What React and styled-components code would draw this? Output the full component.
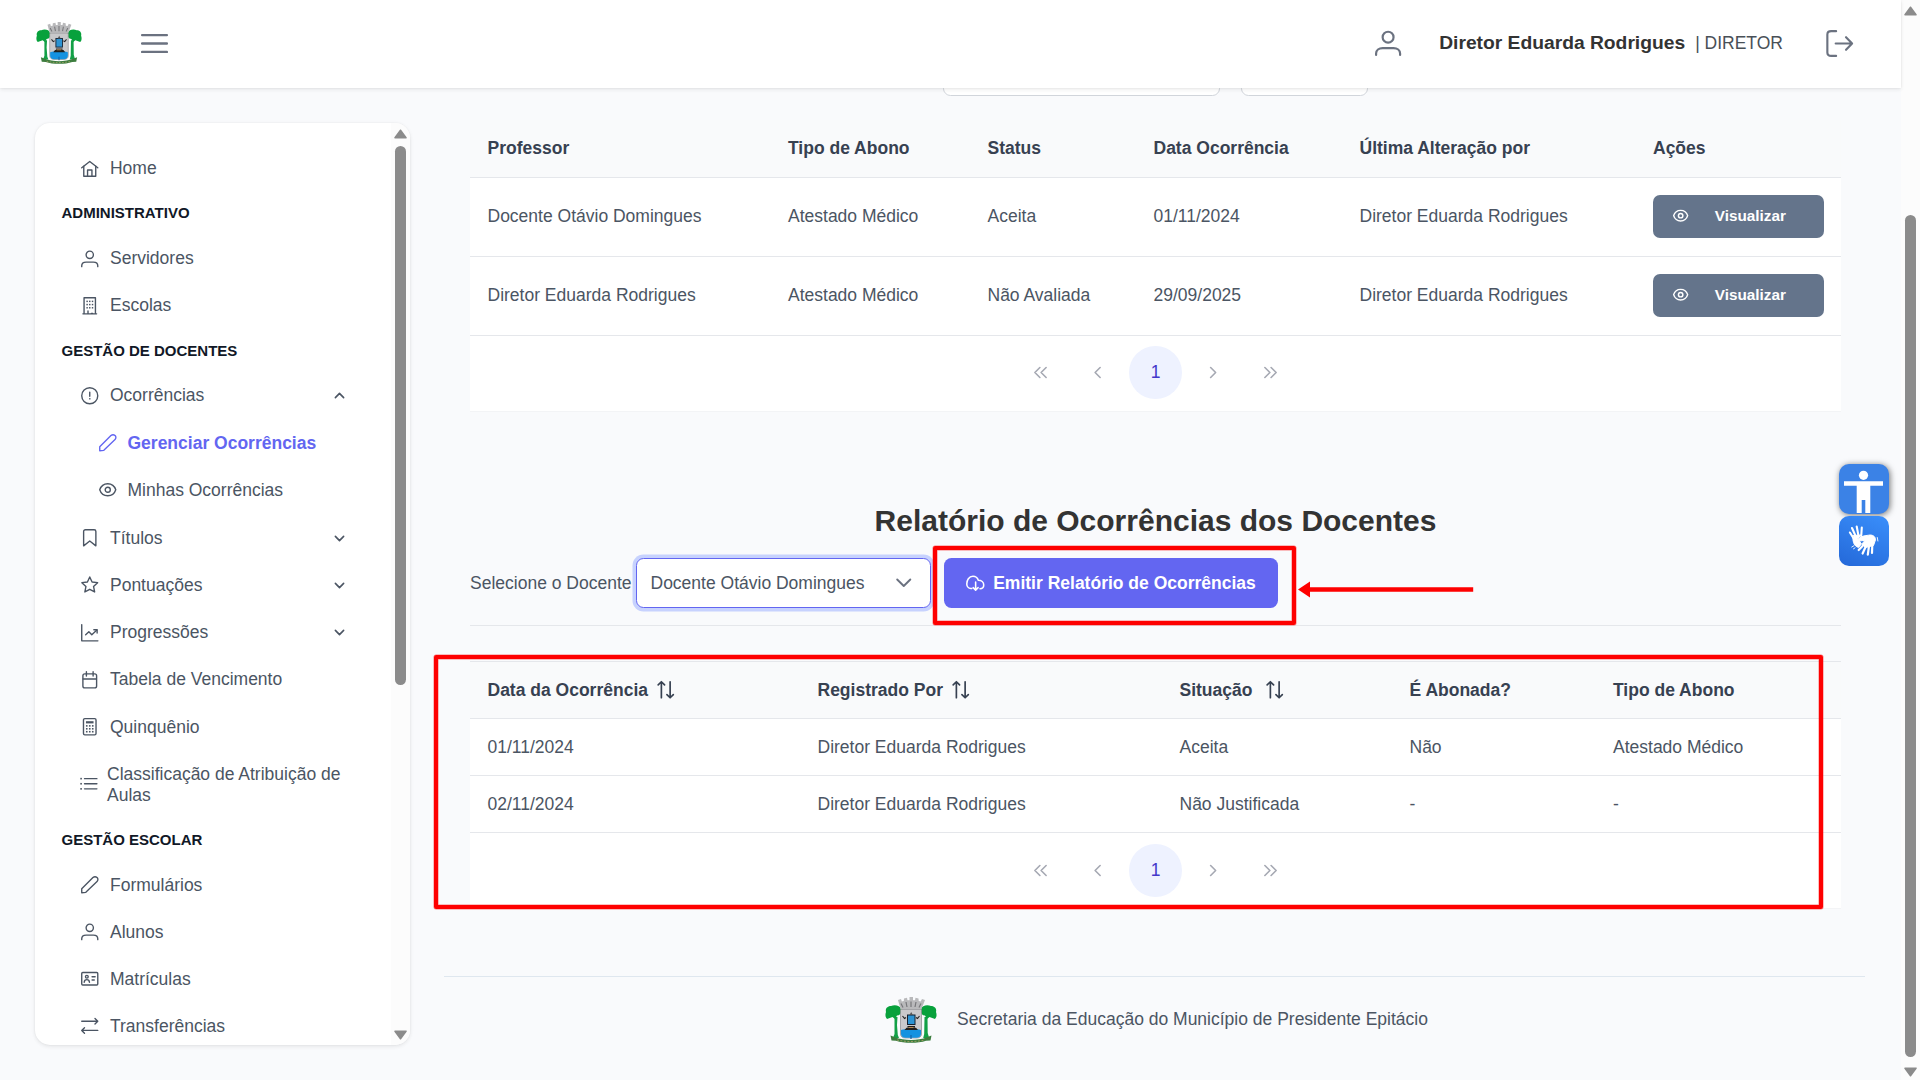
import React from "react";
import styled, { createGlobalStyle, css } from "styled-components";

const GlobalStyle = createGlobalStyle`
  *, *::before, *::after { box-sizing: border-box; }
  html, body { margin: 0; height: 100%; overflow: hidden; }
  body {
    background: #f9fafc;
    color: #4b5563;
    font-family: "Liberation Sans", Arial, Helvetica, sans-serif;
    font-size: 17.5px;
  }
  button { font-family: inherit; }
`;

/* ---------- icons ---------- */

const Svg = styled.svg`
  display: block;
  flex: none;
  width: ${(p) => p.$size || 17.5}px;
  height: ${(p) => p.$size || 17.5}px;
  fill: none;
  stroke: currentColor;
  stroke-width: ${(p) => p.$weight || 1.9};
  stroke-linecap: round;
  stroke-linejoin: round;
`;

const dot = (x, y, w = 2, h = 2) => (
  <rect key={`${x}-${y}`} x={x} y={y} width={w} height={h} fill="currentColor" stroke="none" />
);

const shapes = {
  home: (
    <>
      <path d="M1 10.6 12 2l11 8.6" />
      <path d="M3.8 8.6v13.6h16.4V8.6" />
      <path d="M9 22v-8.2h6V22" />
    </>
  ),
  user: (
    <>
      <circle cx="12" cy="6.6" r="5" />
      <path d="M1 22.8v-1.2c0-2.9 2.6-5 6-5h10c3.4 0 6 2.1 6 5v1.2" />
    </>
  ),
  building: (
    <>
      <path d="M2.6 23.1h18.8M4.2 23V1h15.6v22" />
      {[5, 9.4, 13.8].map((y) => [dot(7.4, y), dot(11, y), dot(14.8, y)])}
      <path d="M9.6 22.5v-3.4M14.2 22.5h1.8" />
    </>
  ),
  alert: (
    <>
      <circle cx="12" cy="12" r="11" />
      <path d="M12 7v5.6" />
      {dot(11.1, 15.2, 1.9, 1.9)}
    </>
  ),
  pencil: <path d="M1 23v-5.4L16.4 2.2a4.1 4.1 0 0 1 5.6 0 3.7 3.7 0 0 1 0 5.4L6.6 22.4z" />,
  eye: (
    <>
      <path d="M1 12c1.8-5.6 6-8.3 11-8.3s9.2 2.7 11 8.3c-1.8 5.6-6 8.3-11 8.3S2.8 17.6 1 12z" />
      <circle cx="12" cy="12" r="3.5" />
    </>
  ),
  bookmark: <path d="M3.6 23.1V3.4C3.6 2 4.600 1 6 1h12c1.4 0 2.4 1 2.4 2.4v19.7L12 16.5z" />,
  star: (
    <path d="M12 1.3l3.2 6.9 7.6.9-5.6 5.2 1.5 7.6L12 18.2l-6.7 3.7 1.5-7.6L1.2 9.1l7.6-.9z" />
  ),
  chart: (
    <>
      <path d="M1 .8v22.3h22.2" />
      <path d="M6.4 14.8l4.4-4.1 4 4.1 7-6.6" />
      <path d="M17.6 7.900h4.500v4.400" />
    </>
  ),
  calendar: (
    <>
      <rect x="2.6" y="3.9" width="18.8" height="19.2" rx="2.6" />
      <path d="M7.4.9v6M16.6.9v6M3 11h18" />
    </>
  ),
  calculator: (
    <>
      <rect x="3.4" y=".9" width="17.2" height="22.2" rx="1.8" />
      {dot(6.8, 4.4, 10.4, 3)}
      {[9.7, 13.7, 17.7].map((y) => [dot(6.8, y, 2.2, 2.2), dot(10.9, y, 2.2, 2.2), dot(15, y, 2.2, 2.2)])}
    </>
  ),
  list: (
    <>
      <path d="M6.2 5h17M6.2 12h17M6.2 19h17" />
      {[5, 12, 19].map((y) => dot(0.4, y - 1.1, 2.2, 2.2))}
    </>
  ),
  card: (
    <>
      <rect x="1" y="3.4" width="22" height="17.2" rx="1.4" />
      <circle cx="8" cy="9.2" r="1.9" />
      <path d="M4.4 16.800c.2-2.500 1.600-3.600 3.600-3.600s3.400 1.100 3.600 3.600M15.200 9.200h4.200M15.200 13.800h3" />
    </>
  ),
  exchange: (
    <>
      <path d="M1 5.800h22M19.200 2l3.800 3.800-3.800 3.800" />
      <path d="M23 18.400H1M4.800 14.600 1 18.400l3.800 3.800" />
    </>
  ),
  cloud: (
    <>
      <path d="M7.600 18.900H6.400C3.200 18.700 1 16 1 12.900 1 8 3.800 3 9 3c3.700 0 6 2.200 7 5.200 4 0 7 2.400 7 6 0 2.700-2 4.800-4.800 4.900" />
      <path d="M12.500 10.500v10.300M9.300 17.700l3.200 3.200 3.200-3.200" />
    </>
  ),
  signout: (
    <>
      <path d="M9 1H4.600C2.600 1 1.200 2.200 1.200 4v16c0 1.800 1.400 3 3.400 3H9" />
      <path d="M8.600 12H23M17.800 6.400 23.200 12l-5.400 5.600" />
    </>
  ),
  bars: <path d="M1 4.500h22M1 12h22M1 19.500h22" />,
  sort: (
    <>
      <path d="M6 23V1.400M1.600 5.400 6 1l4.400 4.400" />
      <path d="M18 1v21.600M13.600 18.600 18 23l4.400-4.400" />
    </>
  ),
  down: <path d="M3 7.500l9 9 9-9" />,
  up: <path d="M3 16.500l9-9 9 9" />,
  left: <path d="M14.600 4l-8 8 8 8" />,
  right: <path d="M7.400 4l8 8-8 8" />,
  first: <path d="M11 4l-8 8 8 8M21 4l-8 8 8 8" />,
  last: <path d="M3 4l8 8-8 8M13 4l8 8-8 8" />,
};

const Icon = ({ name, size, weight }) => (
  <Svg viewBox="0 0 24 24" $size={size} $weight={weight} overflow="visible">
    {shapes[name]}
  </Svg>
);

const CrestSvg = styled.svg`
  display: block;
  flex: none;
  width: ${(p) => p.$w}px;
  height: ${(p) => p.$h}px;
`;

const Crest = ({ w, h }) => (
  <CrestSvg viewBox="0 0 52 46" preserveAspectRatio="none" $w={w} $h={h}>
    <path d="M9.500 20h3l-.5 8 .8 10 1.200 3H8l1.500-4z" fill="#12a046" />
    <path d="M39.500 20h3l.2 16 1.500 5h-6l1-4z" fill="#12a046" />
    <path d="M1 15c-1-4 2-6 5-6 4-1.500 9-.5 10 3 1 4-1 6.500-4 6.500L10 22 7.500 20 2 22C0 20 .2 17 1 15z" fill="#08a13c" />
    <path d="M51 15c1-4-2-6-5-6-4-1.500-9-.5-10 3-1 4 1 6.500 4 6.500L42 22l2.500-2 5.500 2c2-2 1.800-5 1-7z" fill="#08a13c" />
    <path d="M13 3l3-1 .8 2.500 2-.4L19 1.500l3-.8.5 2.500h2V0h3.500v3.200h2l.5-2.500 3 .8.200 2.600 2 .4L37 2l3 1-3.500 9h-21z" fill="#b9b9bb" />
    <path d="M16 6.500l2 4M21 5l1 5M26 4.500V10M31 5l-1 5M36 6.500l-2 4" stroke="#77777a" strokeWidth="1.200" />
    <path d="M15.500 12.500h21V37c0 2.500-2 4-5 4h-11c-3 0-5-1.500-5-4z" fill="#c9c9cb" stroke="#8a8a8d" strokeWidth=".7" />
    <path d="M16 33c3-1.500 6-.5 10-.5s7-1 10 .5v4c0 2.300-2 3.700-4.500 3.700h-11C18 40.700 16 39.300 16 37z" fill="#1592e0" />
    <rect x="22.500" y="18" width="7.500" height="9.500" fill="#2c93d2" stroke="#152230" strokeWidth="1" />
    <path d="M24.500 18l1.700-3 1.700 3z" fill="#555" />
    <path d="M17.500 19l2 2.500 1.500-1M34.500 19l-2 2.500-1.500-1" fill="none" stroke="#222" strokeWidth="1.100" />
    <path d="M19.500 33l2-2.200h9.500l2 2.200zM22.500 29h7.500v1.400h-7.500z" fill="#20201e" />
    <path d="M23.500 30.500h5" stroke="#d79b50" strokeWidth=".8" />
    <path d="M5.500 38.500l4 1.500c5 2.200 11 3 16.500 3s11.500-.8 16.500-3l4-1.500-1 5-4.500.2c-4 1.500-9.500 2-15 2s-11-.5-15-2l-4.500-.2z" fill="#3c7d3e" />
    <path d="M12 43c9 2 19 2 28 0" fill="none" stroke="#b3a46a" strokeWidth=".8" strokeDasharray="2 1.500" />
    <path d="M26 38v4" stroke="#1565a5" strokeWidth="1.200" />
  </CrestSvg>
);

/* ---------- shell ---------- */

const Shell = styled.div`
  display: flex;
  width: 1920px;
  height: 1080px;
  overflow: hidden;
`;

const Page = styled.div`
  flex: 1;
  display: flex;
  flex-direction: column;
  min-width: 0;
`;

const Topbar = styled.header`
  flex: none;
  display: flex;
  align-items: center;
  height: 88px;
  padding: 0 48px 2px 36px;
  background: #fff;
  color: #6b7280;
  box-shadow: 0 3px 5px rgba(0, 0, 0, 0.02), 0 0 2px rgba(0, 0, 0, 0.05), 0 1px 4px rgba(0, 0, 0, 0.08);
  z-index: 2;
`;

const MenuToggle = styled.div`
  margin-left: 59px;
`;

const Account = styled.div`
  display: flex;
  align-items: center;
  margin-left: auto;
`;

const AccountName = styled.strong`
  margin-left: 38px;
  color: #333;
  font-size: 19.25px;
  line-height: 24px;
  white-space: nowrap;
`;

const AccountRole = styled.span`
  margin: 0 43px 0 10px;
  color: #495057;
  line-height: 24px;
  white-space: nowrap;
`;

const Body = styled.div`
  flex: 1;
  display: flex;
  align-items: flex-start;
  min-height: 0;
`;

/* ---------- scrollbars ---------- */

const Track = styled.div`
  flex: none;
  display: flex;
  flex-direction: column;
  align-items: center;
  width: 19px;
  padding: ${(p) => p.$pad};
  background: #fcfcfc;
`;

const Thumb = styled.div`
  width: 11px;
  height: ${(p) => p.$length}px;
  margin: ${(p) => p.$before}px 0 auto;
  border-radius: 6px;
  background: #8b8b8b;
`;

const Arrow = styled.svg`
  display: block;
  flex: none;
  width: 13px;
  height: 10px;
  fill: #8b8b8b;
  stroke: #8b8b8b;
  stroke-width: 1.5;
  stroke-linejoin: round;
`;

const Scrollbar = ({ pad, before, length }) => (
  <Track $pad={pad}>
    <Arrow viewBox="0 0 13 10"><path d="M6.500 1.200 12 8.800H1z" /></Arrow>
    <Thumb $before={before} $length={length} />
    <Arrow viewBox="0 0 13 10"><path d="M6.500 8.800 12 1.200H1z" /></Arrow>
  </Track>
);

/* ---------- sidebar ---------- */

const Sidebar = styled.aside`
  flex: none;
  display: flex;
  width: 375px;
  height: 922px;
  margin: 35px 0 0 35px;
  border-radius: 15px;
  overflow: hidden;
  background: #fff;
  box-shadow: 0 3px 5px rgba(0, 0, 0, 0.02), 0 0 2px rgba(0, 0, 0, 0.05), 0 1px 4px rgba(0, 0, 0, 0.08);
`;

const Menu = styled.nav`
  flex: 1;
  display: flex;
  flex-direction: column;
  padding: 22.2px 35px 0 26.5px;
`;

const Section = styled.div`
  flex: none;
  height: 42.8px;
  color: #111827;
  font-size: 15px;
  font-weight: 700;
  line-height: 42.8px;
  text-transform: uppercase;
`;

const Item = styled.a`
  flex: none;
  display: flex;
  align-items: center;
  gap: ${(p) => (p.$tall ? 10 : 11.3)}px;
  height: ${(p) => (p.$tall ? 68 : 47.2)}px;
  margin-bottom: ${(p) => (p.$last ? 0.9 : 0)}px;
  padding: 0 11.5px 0 ${(p) => (p.$nested ? 37.2 : p.$tall ? 18 : 19.7)}px;
  color: #4b5563;
  line-height: 21px;
  white-space: ${(p) => (p.$tall ? "normal" : "nowrap")};
  ${(p) => p.$active && css`
    color: #6366f1;
    font-weight: 700;
  `}
`;

const ItemIcon = styled.span`
  flex: none;
  margin-bottom: 1px;
`;

const ItemLabel = styled.span`
  flex: 1;
`;

const menu = [
  { icon: "home", label: "Home" },
  { section: "Administrativo" },
  { icon: "user", label: "Servidores" },
  { icon: "building", label: "Escolas" },
  { section: "Gestão de Docentes" },
  { icon: "alert", label: "Ocorrências", toggle: "up" },
  { icon: "pencil", label: "Gerenciar Ocorrências", nested: true, active: true },
  { icon: "eye", label: "Minhas Ocorrências", nested: true, last: true },
  { icon: "bookmark", label: "Títulos", toggle: "down" },
  { icon: "star", label: "Pontuações", toggle: "down" },
  { icon: "chart", label: "Progressões", toggle: "down" },
  { icon: "calendar", label: "Tabela de Vencimento" },
  { icon: "calculator", label: "Quinquênio" },
  { icon: "list", label: "Classificação de Atribuição de Aulas", tall: true },
  { section: "Gestão Escolar" },
  { icon: "pencil", label: "Formulários" },
  { icon: "user", label: "Alunos" },
  { icon: "card", label: "Matrículas" },
  { icon: "exchange", label: "Transferências" },
];

/* ---------- content ---------- */

const Main = styled.main`
  position: relative;
  flex: 1;
  min-width: 0;
  padding: 0 36px 0 34px;
`;

const Content = styled.div`
  padding: 0 24px 0 26px;
`;

const Filters = styled.div`
  display: flex;
  align-items: flex-end;
  gap: 21px;
  height: 8px;
  padding-left: 473px;
  overflow: hidden;
`;

const FilterField = styled.div`
  flex: none;
  width: ${(p) => p.$width}px;
  height: 50px;
  border: 1px solid #d1d5db;
  border-radius: 7.5px;
  background: #fff;
`;

const Table = styled.div`
  margin-top: ${(p) => p.$top}px;
  background: #fff;
`;

const Row = styled.div`
  display: grid;
  grid-template-columns: ${(p) => p.$columns};
  align-items: center;
  height: ${(p) => p.$height}px;
  padding-bottom: ${(p) => p.$lift || 0}px;
  border-bottom: 1px solid #e5e7eb;
  ${(p) => p.$head && css`
    border-top: 1px solid ${p.$topLine || "#f9fafb"};
    background: #f9fafb;
    color: #374151;
    font-weight: 700;
  `}
`;

const Cell = styled.div`
  display: flex;
  align-items: center;
  gap: ${(p) => p.$gap || 9}px;
  padding: 0 17.5px;
  line-height: 20px;
  white-space: nowrap;
`;

const ViewButton = styled.button`
  display: flex;
  align-items: center;
  gap: 26.5px;
  width: 171px;
  height: 43px;
  padding: 0 20px;
  border: 0;
  border-radius: 7px;
  background: #64748b;
  color: #fff;
  font-size: 15.3px;
  font-weight: 700;
`;

const Paginator = styled.div`
  display: flex;
  align-items: center;
  justify-content: center;
  gap: 5px;
  height: 76px;
  padding-bottom: ${(p) => p.$lift || 0}px;
  border-bottom: 1px solid #f3f4f6;
`;

const PageButton = styled.span`
  display: flex;
  align-items: center;
  justify-content: center;
  width: 52.5px;
  height: 52.5px;
  border-radius: 50%;
  color: ${(p) => (p.$current ? "#4338ca" : "#a6a9b3")};
  background: ${(p) => (p.$current ? "#eef2ff" : "transparent")};
`;

const Title = styled.h2`
  margin: 91px 0 19px;
  color: #333;
  font-size: 30px;
  line-height: 36px;
  text-align: center;
`;

const ReportForm = styled.div`
  display: flex;
  align-items: center;
  height: 68px;
  padding-bottom: 17px;
  border-bottom: 1px solid #e5e7eb;
`;

const FieldLabel = styled.label`
  width: 166px;
  white-space: nowrap;
`;

const Select = styled.div`
  display: flex;
  align-items: center;
  justify-content: space-between;
  width: 295px;
  height: 50px;
  padding: 0 18px 0 13.5px;
  border: 1px solid #6366f1;
  border-radius: 7.5px;
  background: #fff;
  box-shadow: 0 0 0 3.5px #c7d2fe;
`;

const Chevron = styled.span`
  color: #6b7280;
`;

const ReportButton = styled.button`
  display: flex;
  align-items: center;
  gap: 8.7px;
  width: 334px;
  height: 50px;
  margin-left: 13px;
  padding: 0 22px;
  border: 0;
  border-radius: 7.5px;
  background: #6366f1;
  color: #fff;
  font-size: 17.5px;
  font-weight: 700;
  white-space: nowrap;
`;

const Footer = styled.footer`
  display: flex;
  align-items: center;
  justify-content: center;
  gap: 20px;
  height: 87px;
  margin-top: 67px;
  padding-left: 4px;
  border-top: 1px solid #dfe7ef;
`;

const FooterText = styled.span`
  padding-bottom: 2px;
`;

/* ---------- overlays ---------- */

const Highlight = styled.div`
  position: absolute;
  left: ${(p) => p.$x}px;
  top: ${(p) => p.$y}px;
  width: ${(p) => p.$w}px;
  height: ${(p) => p.$h}px;
  border: 4px solid #fe0000;
  border-radius: 2px;
  box-shadow: 0 0 0 0.5px rgba(254, 0, 0, 0.5), inset 0 0 0 0.5px rgba(254, 0, 0, 0.5);
`;

const Pointer = styled.svg`
  position: absolute;
  left: 888px;
  top: 493px;
  width: 176px;
  height: 17px;
  fill: #fe0000;
`;

const Assist = styled.div`
  position: fixed;
  top: 464px;
  right: 31px;
  display: flex;
  flex-direction: column;
  gap: 2px;
`;

const AssistTile = styled.div`
  width: 50px;
  height: 50px;
  border-radius: 10px;
  background: ${(p) => p.$fill};
  box-shadow: ${(p) => (p.$raised ? "1px 1px 6px rgba(0, 0, 0, 0.55)" : "none")};
`;

const AssistArt = styled.svg`
  display: block;
  width: 50px;
  height: 50px;
  fill: #fff;
  stroke: #fff;
  stroke-linecap: round;
  stroke-linejoin: round;
`;

/* ---------- data ---------- */

const requestColumns = "300.5px 199.5px 166px 206px 293.5px 205.5px";
const requests = [
  ["Docente Otávio Domingues", "Atestado Médico", "Aceita", "01/11/2024", "Diretor Eduarda Rodrigues"],
  ["Diretor Eduarda Rodrigues", "Atestado Médico", "Não Avaliada", "29/09/2025", "Diretor Eduarda Rodrigues"],
];

const reportColumns = "330px 362px 230px 203.5px 245.5px";
const report = [
  ["01/11/2024", "Diretor Eduarda Rodrigues", "Aceita", "Não", "Atestado Médico"],
  ["02/11/2024", "Diretor Eduarda Rodrigues", "Não Justificada", "-", "-"],
];

const Pages = ({ lift }) => (
  <Paginator $lift={lift}>
    <PageButton><Icon name="first" size={15} weight={2.6} /></PageButton>
    <PageButton><Icon name="left" size={15} weight={2.6} /></PageButton>
    <PageButton $current>1</PageButton>
    <PageButton><Icon name="right" size={15} weight={2.6} /></PageButton>
    <PageButton><Icon name="last" size={15} weight={2.6} /></PageButton>
  </Paginator>
);

export default function App() {
  return (
    <>
      <GlobalStyle />
      <Shell>
        <Page>
          <Topbar>
            <Crest w={46} h={42} />
            <MenuToggle><Icon name="bars" size={27} weight={2.1} /></MenuToggle>
            <Account>
              <Icon name="user" size={26.2} weight={2} />
              <AccountName>Diretor Eduarda Rodrigues</AccountName>
              <AccountRole>| DIRETOR</AccountRole>
              <Icon name="signout" size={27} weight={1.9} />
            </Account>
          </Topbar>

          <Body>
            <Sidebar>
              <Menu>
                {menu.map((m) =>
                  m.section ? (
                    <Section key={m.section}>{m.section}</Section>
                  ) : (
                    <Item key={m.label} $nested={m.nested} $active={m.active} $tall={m.tall} $last={m.last}>
                      <ItemIcon><Icon name={m.icon} /></ItemIcon>
                      <ItemLabel>{m.label}</ItemLabel>
                      {m.toggle && <Icon name={m.toggle} size={11} weight={3.5} />}
                    </Item>
                  )
                )}
              </Menu>
              <Scrollbar pad="6px 0 5px" before={7} length={539} />
            </Sidebar>

            <Main>
              <Content>
                <Filters>
                  <FilterField $width={277} />
                  <FilterField $width={127} />
                </Filters>

                <Table $top={24}>
                  <Row $head $columns={requestColumns} $height={58} $lift={2}>
                    {["Professor", "Tipo de Abono", "Status", "Data Ocorrência", "Última Alteração por", "Ações"].map((h) => (
                      <Cell key={h}>{h}</Cell>
                    ))}
                  </Row>
                  {requests.map((r) => (
                    <Row key={r[0]} $columns={requestColumns} $height={79} $lift={2}>
                      {r.map((c, i) => <Cell key={i}>{c}</Cell>)}
                      <Cell>
                        <ViewButton>
                          <Icon name="eye" size={15.3} weight={2.3} />
                          Visualizar
                        </ViewButton>
                      </Cell>
                    </Row>
                  ))}
                  <Pages lift={2} />
                </Table>

                <Title>Relatório de Ocorrências dos Docentes</Title>

                <ReportForm>
                  <FieldLabel>Selecione o Docente</FieldLabel>
                  <Select>
                    Docente Otávio Domingues
                    <Chevron><Icon name="down" weight={2.6} /></Chevron>
                  </Select>
                  <ReportButton>
                    <Icon name="cloud" size={18.5} weight={2} />
                    Emitir Relatório de Ocorrências
                  </ReportButton>
                </ReportForm>

                <Table $top={35}>
                  <Row $head $topLine="#e5e7eb" $columns={reportColumns} $height={58}>
                    <Cell>Data da Ocorrência<Icon name="sort" weight={2.3} /></Cell>
                    <Cell>Registrado Por<Icon name="sort" weight={2.3} /></Cell>
                    <Cell $gap={14}>Situação<Icon name="sort" weight={2.3} /></Cell>
                    <Cell>É Abonada?</Cell>
                    <Cell>Tipo de Abono</Cell>
                  </Row>
                  {report.map((r) => (
                    <Row key={r[0]} $columns={reportColumns} $height={57}>
                      {r.map((c, i) => <Cell key={i}>{c}</Cell>)}
                    </Row>
                  ))}
                  <Pages />
                </Table>
              </Content>

              <Footer>
                <Crest w={52} h={46} />
                <FooterText>Secretaria da Educação do Município de Presidente Epitácio</FooterText>
              </Footer>

              <Highlight $x={523} $y={458} $w={363} $h={79} />
              <Highlight $x={24} $y={567} $w={1389} $h={254} />
              <Pointer viewBox="0 0 176 17">
                <path d="M0 8.400 12 .6v5.600h163.200v4.600H12v5.600z" />
              </Pointer>
            </Main>
          </Body>
        </Page>

        <Scrollbar pad="6px 0 3px" before={199} length={842} />
      </Shell>

      <Assist>
        <AssistTile $raised $fill="#3b82e6">
          <AssistArt viewBox="0 0 50 50">
            <g stroke="none">
              <circle cx="24.5" cy="11.3" r="4.6" />
              <path d="M5 17.300h39v4.500H31.300V49h-5V36h-3.600v13h-5V21.800H5z" />
            </g>
          </AssistArt>
        </AssistTile>
        <AssistTile $fill="linear-gradient(25deg, #2468d8, #3a8ffb)">
          <AssistArt viewBox="0 0 50 50">
            <path d="M14.500 19.500l7.500-.5-3.500 3.500 4 5.500-3 3.500C16 30.500 14.500 28 14 24z" strokeWidth="1" />
            <path d="M10.900 16.500l4.400 7M13 12l4.500 10M17.700 10.500l2 10.500M22.800 11.500l-.6 9" strokeWidth="2.1" fill="none" />
            <path d="M19.500 22.500l5-2.500 5-.8c4-.8 7 1.200 7 4.600l-2 5.700-8 2-3.500-3.600 3-3.600-6 .8z" strokeWidth="1" />
            <path d="M25 28.500l-5.300 5.500M27 30l-3.400 7.500M30 30l-1.200 8.700M33.300 28.500l-.3 8.500" strokeWidth="2.2" fill="none" />
            <path d="M12.800 31l2-1.200M14.500 32.800l1.500-1M38.300 21.500l.6 3.500" strokeWidth=".9" fill="none" />
          </AssistArt>
        </AssistTile>
      </Assist>
    </>
  );
}
